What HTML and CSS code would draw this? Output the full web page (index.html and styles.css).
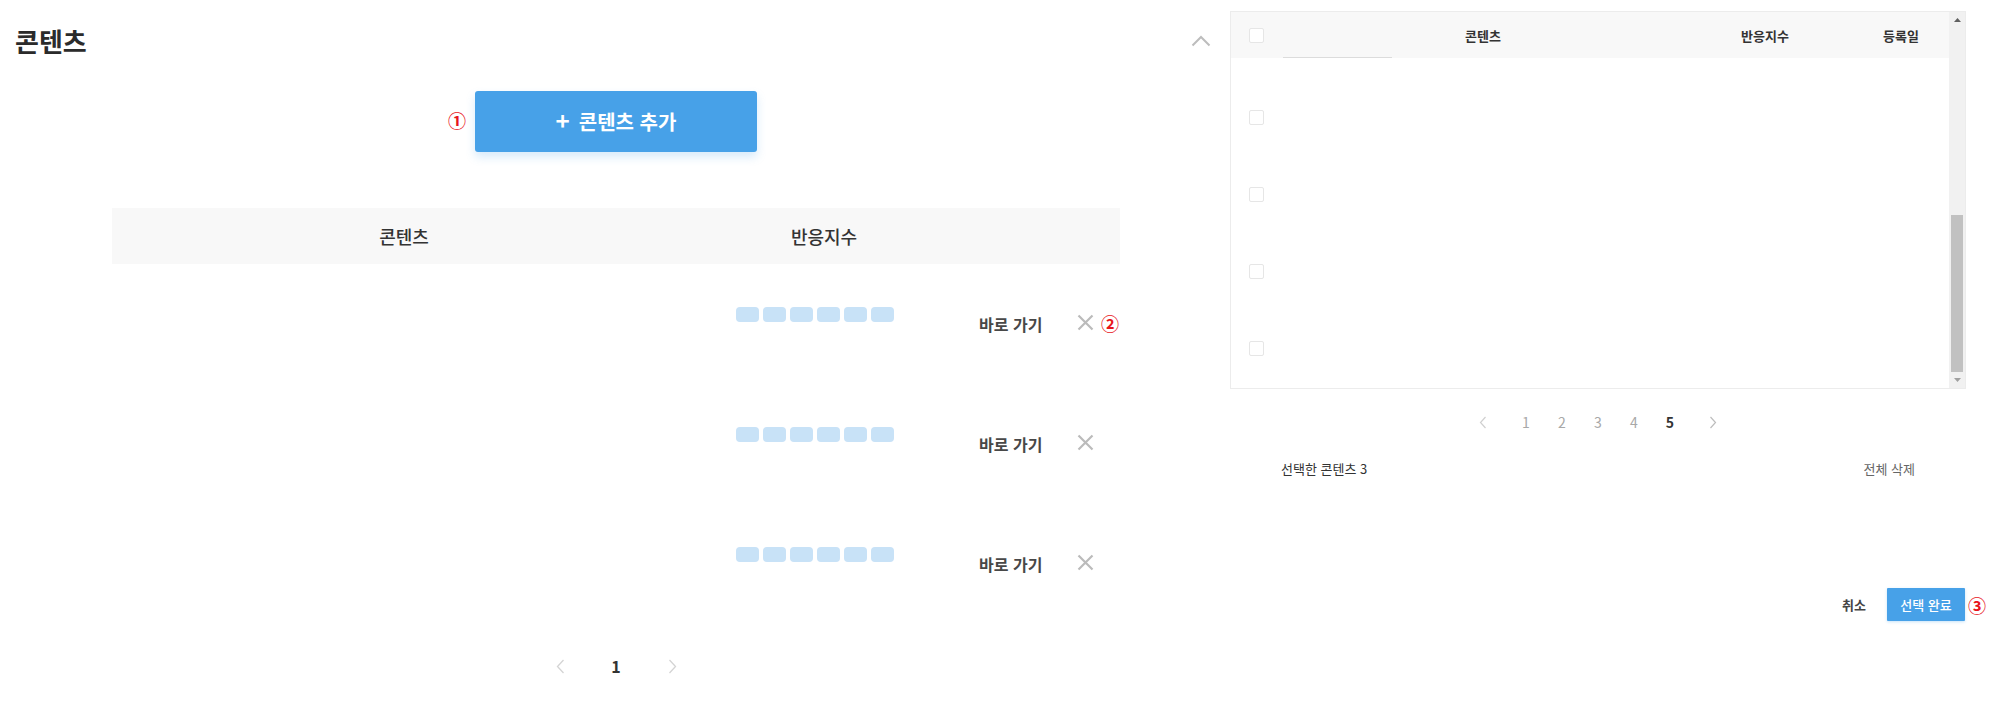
FILE: index.html
```html
<!DOCTYPE html>
<html lang="ko">
<head>
<meta charset="utf-8">
<title>콘텐츠</title>
<link rel="stylesheet" href="styles.css">
</head>
<body>
<div class="page">
  <section class="main">
    <div class="title-row">
      <h2 class="title">콘텐츠</h2>
      <svg class="chevron" width="20" height="12" viewBox="0 0 20 12"><polyline points="1.5,10.5 10,2 18.5,10.5" fill="none" stroke="#bdbdbd" stroke-width="2"/></svg>
    </div>
    <div class="table-wrap">
      <div class="add-wrap">
        <span class="mark mark-1">①</span>
        <button class="add-btn"><span class="plus">+</span><span>콘텐츠 추가</span></button>
      </div>
      <div class="thead">
        <div class="th">콘텐츠</div>
        <div class="th">반응지수</div>
        <div></div>
        <div></div>
      </div>
      <div class="trow">
        <div></div>
        <div class="bars"><i></i><i></i><i></i><i></i><i></i><i></i></div>
        <div class="go">바로 가기</div>
        <div class="del">
          <svg width="17" height="17" viewBox="0 0 17 17"><path d="M1.5 1.5L15.5 15.5M15.5 1.5L1.5 15.5" stroke="#bbbbbb" stroke-width="2.2"/></svg>
          <span class="mark">②</span>
        </div>
      </div>
      <div class="trow">
        <div></div>
        <div class="bars"><i></i><i></i><i></i><i></i><i></i><i></i></div>
        <div class="go">바로 가기</div>
        <div class="del">
          <svg width="17" height="17" viewBox="0 0 17 17"><path d="M1.5 1.5L15.5 15.5M15.5 1.5L1.5 15.5" stroke="#bbbbbb" stroke-width="2.2"/></svg>
        </div>
      </div>
      <div class="trow">
        <div></div>
        <div class="bars"><i></i><i></i><i></i><i></i><i></i><i></i></div>
        <div class="go">바로 가기</div>
        <div class="del">
          <svg width="17" height="17" viewBox="0 0 17 17"><path d="M1.5 1.5L15.5 15.5M15.5 1.5L1.5 15.5" stroke="#bbbbbb" stroke-width="2.2"/></svg>
        </div>
      </div>
      <div class="pager">
        <span class="pg"><svg width="9" height="15" viewBox="0 0 9 15"><polyline points="7.5,1 1.5,7.5 7.5,14" fill="none" stroke="#d4d4d4" stroke-width="1.3"/></svg></span>
        <span class="pg cur">1</span>
        <span class="pg"><svg width="9" height="15" viewBox="0 0 9 15"><polyline points="1.5,1 7.5,7.5 1.5,14" fill="none" stroke="#d4d4d4" stroke-width="1.3"/></svg></span>
      </div>
    </div>
  </section>

  <section class="modal">
    <div class="panel">
      <div class="panel-content">
        <div class="m-head">
          <div class="cb-cell"><span class="cb"></span></div>
          <div class="mh">콘텐츠</div>
          <div class="mh">반응지수</div>
          <div class="mh date">등록일</div>
        </div>
        <div class="m-body">
          <div class="m-partial"><span class="clip-line"></span></div>
          <div class="m-row"><span class="cb"></span></div>
          <div class="m-row"><span class="cb"></span></div>
          <div class="m-row"><span class="cb"></span></div>
          <div class="m-row"><span class="cb"></span></div>
        </div>
      </div>
      <div class="scrollbar">
        <div class="sb-btn"><svg width="7" height="4" viewBox="0 0 7 4"><polygon points="0,4 3.5,0 7,4" fill="#606060"/></svg></div>
        <div class="sb-track"><div class="sb-thumb"></div></div>
        <div class="sb-btn"><svg width="7" height="4" viewBox="0 0 7 4"><polygon points="0,0 3.5,4 7,0" fill="#a0a0a0"/></svg></div>
      </div>
    </div>
    <div class="m-pager">
      <span class="mp arrow"><svg width="8" height="13" viewBox="0 0 8 13"><polyline points="6.5,1 1.5,6.5 6.5,12" fill="none" stroke="#d0d0d0" stroke-width="1.2"/></svg></span>
      <span class="mp">1</span>
      <span class="mp">2</span>
      <span class="mp">3</span>
      <span class="mp">4</span>
      <span class="mp on">5</span>
      <span class="mp arrow"><svg width="8" height="13" viewBox="0 0 8 13"><polyline points="1.5,1 6.5,6.5 1.5,12" fill="none" stroke="#bdbdbd" stroke-width="1.2"/></svg></span>
    </div>
    <div class="selected">
      <span>선택한 콘텐츠 3</span>
      <span class="clear">전체 삭제</span>
    </div>
    <div class="actions">
      <span class="cancel">취소</span>
      <button class="done">선택 완료</button>
      <span class="mark mark-3">③</span>
    </div>
  </section>
</div>
</body>
</html>
```

FILE: styles.css
```css
* { box-sizing: border-box; }
html, body { margin: 0; padding: 0; background: #fff; }
body {
  font-family: "Noto Sans CJK KR", "Noto Sans", sans-serif;
  color: #333;
  width: 2000px;
  height: 701px;
  overflow: hidden;
}
.page { display: flex; align-items: flex-start; }

.main { flex: 0 0 1230px; padding: 0 19px 0 15px; }
.title-row {
  display: flex; justify-content: space-between; align-items: center;
  padding-top: 23px; height: 59px;
}
.title { margin: 0; font-size: 26px; line-height: 36px; font-weight: 700; color: #2b2b2b; }
.chevron { display: block; margin-top: 0; }

.table-wrap { margin-left: 97px; width: 1008px; }
.add-wrap { position: relative; display: flex; justify-content: center; margin-top: 32px; }
.add-btn {
  width: 282px; height: 61px; border: 0; border-radius: 3px;
  background: #47a1e8; color: #fff;
  font-family: inherit; font-size: 20px; font-weight: 700;
  box-shadow: 0 5px 10px rgba(71, 161, 232, 0.22);
  display: flex; align-items: center; justify-content: center; gap: 9px;
}
.plus { font-weight: 700; font-size: 24px; line-height: 24px; margin-top: -3px; }
.mark { color: #e8141b; font-size: 18px; line-height: 18px; font-weight: 700; }
.mark-1 { position: absolute; left: 336px; top: 20px; }

.thead {
  margin-top: 56px; height: 56px; background: #f8f8f8;
  display: grid; grid-template-columns: 584px 256px 125px 43px; align-items: center;
}
.th { text-align: center; font-size: 18px; font-weight: 500; color: #333; }

.trow {
  height: 120px;
  display: grid; grid-template-columns: 584px 256px 125px 43px; align-items: center;
}
.bars { display: flex; gap: 4px; padding-left: 40px; margin-bottom: 20px; }
.bars i { display: block; width: 23px; height: 15px; border-radius: 4px; background: #c8e2f7; }
.go { padding-left: 27px; font-size: 16px; font-weight: 700; color: #484848; }
.del { display: flex; align-items: center; gap: 7px; margin-top: -3px; }
.del svg { display: block; }

.pager {
  margin-top: 30px; height: 24px;
  display: flex; justify-content: center; align-items: center; gap: 32px;
}
.pg { width: 24px; display: flex; justify-content: center; align-items: center; font-size: 16px; line-height: 24px; }
.pg.cur { font-weight: 700; color: #333; }

.modal { flex: 0 0 736px; padding-top: 11px; }
.panel { height: 378px; border: 1px solid #ececec; display: flex; }
.panel-content { flex: 1; overflow: hidden; }
.m-head {
  height: 46px; background: #f8f8f8;
  display: grid; grid-template-columns: 50px 404px 160px 1fr; align-items: center;
}
.cb-cell { padding-left: 18px; display: flex; }
.cb { display: block; width: 15px; height: 15px; border: 1px solid #e6e6e6; border-radius: 2px; background: #fff; }
.mh { text-align: center; font-size: 13px; font-weight: 700; color: #333; }
.mh.date { padding-left: 8px; }
.m-partial { height: 22px; padding-left: 52px; }
.clip-line { display: block; width: 109px; height: 1px; margin-top: -1px; background: #dcdcdc; }
.m-row { height: 77px; display: flex; align-items: center; padding-left: 18px; }

.scrollbar { width: 16px; background: #f1f1f1; display: flex; flex-direction: column; }
.sb-btn { height: 16px; display: flex; align-items: center; justify-content: center; }
.sb-btn svg { display: block; }
.sb-track { flex: 1; padding-top: 187px; padding-left: 2px; padding-right: 2px; }
.sb-thumb { height: 157px; background: #c1c1c1; }

.m-pager {
  margin-top: 21px; height: 24px;
  display: flex; justify-content: center; align-items: center; gap: 16px;
}
.mp { width: 20px; text-align: center; font-size: 14px; line-height: 24px; color: #a8a8a8; }
.mp.on { color: #333; font-weight: 700; }
.mp.arrow { display: flex; justify-content: center; align-items: center; margin: 0 7px; }

.selected {
  margin-top: 24px; height: 20px; padding: 0 51px;
  display: flex; justify-content: space-between; align-items: center;
  font-size: 13px; color: #333;
}
.clear { color: #666; }

.actions {
  position: relative;
  margin-top: 110px; padding-right: 1px;
  display: flex; justify-content: flex-end; align-items: center; gap: 21px;
}
.cancel { font-size: 13px; font-weight: 700; color: #444; }
.done {
  width: 78px; height: 33px; border: 0; border-radius: 1px;
  background: #47a1e8; color: #fff;
  font-family: inherit; font-size: 13px; font-weight: 500;
  box-shadow: 0 1px 3px rgba(71, 161, 232, 0.3);
}
.mark-3 { position: absolute; left: 738px; top: 8px; }
```
